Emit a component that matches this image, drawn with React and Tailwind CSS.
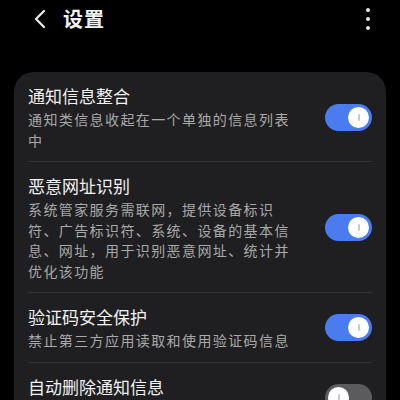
import React from "react";

const font = { fontFamily: '"Noto Sans CJK SC", "Noto Sans", sans-serif' };

function Toggle({ on }) {
  return (
    <div
      className={
        "flex h-[27px] w-[47px] shrink-0 items-center rounded-full px-[3px] " +
        (on ? "justify-end bg-[#4a7bef]" : "justify-start bg-[#5b5b5d]")
      }
    >
      <div className="flex h-[21px] w-[21px] items-center justify-center rounded-full bg-white">
        <div className="h-[7px] w-[2px] rounded-full bg-[#c9c9c9]" />
      </div>
    </div>
  );
}

function Row({ title, desc, on, last }) {
  return (
    <div className="px-[14px]">
      <div className="flex items-center gap-3 pt-[12px] pb-[11px]">
        <div className="flex-1">
          <div className="text-[17px] leading-[24px] text-[#f2f2f2]">{title}</div>
          {desc && (
            <div className="mt-[1px] w-[270px] text-[14px] leading-[20.5px] tracking-[1.4px] text-[#a9a9a9]">
              {desc}
            </div>
          )}
        </div>
        <Toggle on={on} />
      </div>
      {!last && <div className="h-px bg-[#333335]" />}
    </div>
  );
}

export default function App() {
  return (
    <div className="h-[400px] w-[400px] overflow-hidden bg-black" style={font}>
      <div className="flex h-[38px] items-center pl-[33px] pr-[30px]">
        <svg width="14" height="20" viewBox="0 0 14 20" className="mr-[16px]">
          <path d="M11 2 L3 10 L11 18" fill="none" stroke="#eeeeee" strokeWidth="2.2" strokeLinecap="round" strokeLinejoin="round" />
        </svg>
        <div className="text-[20px] font-bold leading-[28px] tracking-[1px] text-[#f2f2f2]">设置</div>
        <div className="flex-1" />
        <div className="flex flex-col items-center gap-[5px]">
          <div className="h-[4px] w-[4px] rounded-full bg-[#e8e8e8]" />
          <div className="h-[4px] w-[4px] rounded-full bg-[#e8e8e8]" />
          <div className="h-[4px] w-[4px] rounded-full bg-[#e8e8e8]" />
        </div>
      </div>
      <div className="mx-[14px] mt-[34px] overflow-hidden rounded-[20px] bg-[#1f1f21]">
        <Row title="通知信息整合" desc="通知类信息收起在一个单独的信息列表中" on />
        <Row
          title="恶意网址识别"
          desc="系统管家服务需联网，提供设备标识符、广告标识符、系统、设备的基本信息、网址，用于识别恶意网址、统计并优化该功能"
          on
        />
        <Row title="验证码安全保护" desc="禁止第三方应用读取和使用验证码信息" on />
        <Row title="自动删除通知信息" desc="已读的通知信息将在30天后自动删除" on={false} last />
      </div>
    </div>
  );
}
